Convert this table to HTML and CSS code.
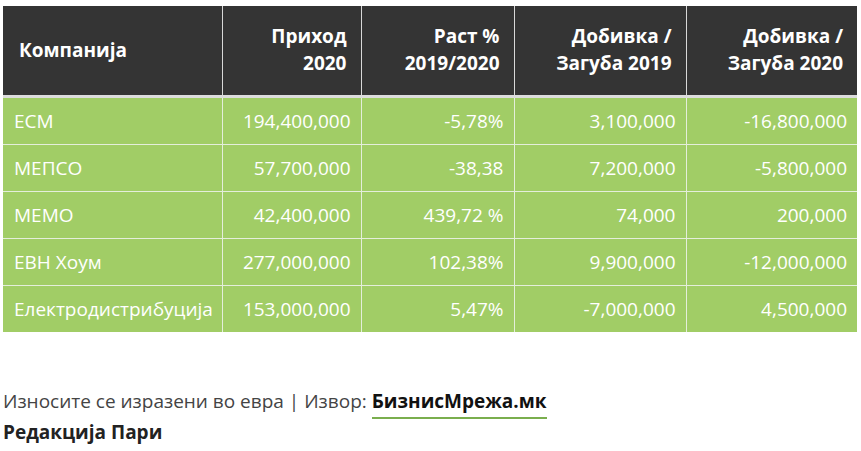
FILE: index.html
```html
<!DOCTYPE html>
<html lang="mk">
<head>
<meta charset="utf-8">
<title>Компании</title>
<link rel="stylesheet" href="styles.css">
</head>
<body>
<div class="wrap">
  <table class="data">
    <colgroup>
      <col class="c1"><col class="c2"><col class="c3"><col class="c4"><col class="c5">
    </colgroup>
    <thead>
      <tr>
        <th class="left">Компанија</th>
        <th>Приход<br>2020</th>
        <th>Раст %<br>2019/2020</th>
        <th>Добивка /<br>Загуба 2019</th>
        <th>Добивка /<br>Загуба 2020</th>
      </tr>
    </thead>
    <tbody>
      <tr><td class="left">ЕСМ</td><td>194,400,000</td><td>-5,78%</td><td>3,100,000</td><td>-16,800,000</td></tr>
      <tr><td class="left">МЕПСО</td><td>57,700,000</td><td>-38,38</td><td>7,200,000</td><td>-5,800,000</td></tr>
      <tr><td class="left">МЕМО</td><td>42,400,000</td><td>439,72 %</td><td>74,000</td><td>200,000</td></tr>
      <tr><td class="left">ЕВН Хоум</td><td>277,000,000</td><td>102,38%</td><td>9,900,000</td><td>-12,000,000</td></tr>
      <tr><td class="left">Електродистрибуција</td><td>153,000,000</td><td>5,47%</td><td>-7,000,000</td><td>4,500,000</td></tr>
    </tbody>
  </table>
  <p class="note">Износите се изразени во евра | Извор: <a class="src" href="#">БизнисМрежа.мк</a><br><strong>Редакција Пари</strong></p>
</div>
</body>
</html>
```
FILE: styles.css
```css
html, body {
  margin: 0;
  padding: 0;
  background: #ffffff;
}
body {
  font-family: "Open Sans", "Noto Sans", "DejaVu Sans", sans-serif;
  font-size: 19px;
  color: #444;
}
.wrap {
  padding: 6px 4px 0 3px;
}
.data {
  width: 854px;
  border-collapse: collapse;
  table-layout: fixed;
}
.c1 { width: 219px; }
.c2 { width: 139px; }
.c3 { width: 153px; }
.c4 { width: 172px; }
.c5 { width: 171px; }
.data th {
  background: #343434;
  color: #ffffff;
  font-weight: 700;
  line-height: 27px;
  padding: 17px 14px 18px 14px;
  text-align: right;
  vertical-align: middle;
  border-left: 1px solid #d8d8d8;
  border-right: 1px solid #d8d8d8;
  border-bottom: 3px solid #dcdcdc;
}
.data th:first-child { border-left: none; padding-left: 16px; }
.data th:last-child { border-right: none; }
.data td {
  background: #a1cd66;
  color: #ffffff;
  line-height: 24px;
  padding: 11px 10px 11px 11px;
  text-align: right;
  border: 1px solid #e4eedb;
  white-space: nowrap;
}
.data td:first-child { border-left: none; }
.data td:last-child { border-right: none; }
.data tbody tr:last-child td { border-bottom: none; }
.data .left { text-align: left; }
.note {
  margin: 54px 0 0 0;
  line-height: 31px;
  color: #444;
}
.src {
  color: #111;
  font-weight: 700;
  text-decoration: none;
  border-bottom: 2px solid #7aae4e;
  padding-bottom: 3px;
}
.note strong {
  color: #222;
  font-weight: 700;
}
```
